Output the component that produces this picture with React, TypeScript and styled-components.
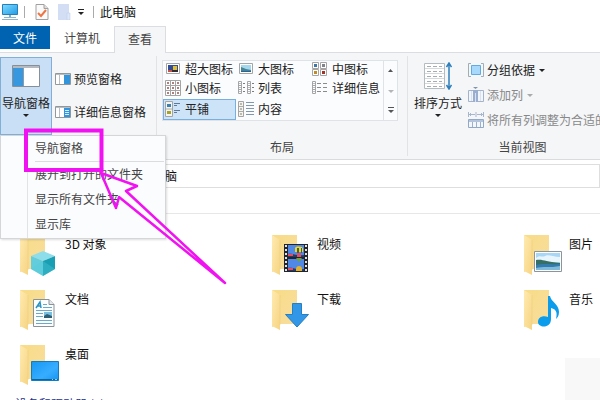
import React from "react";
import styled, { createGlobalStyle, css } from "styled-components";

const GlobalStyle = createGlobalStyle`
  * { box-sizing: border-box; }
  body {
    margin: 0;
    background: #fff;
    color: #222;
    font: 12px/16px "Noto Sans CJK SC", sans-serif;
  }
  button, input {
    margin: 0;
    padding: 0;
    border: 0;
    background: none;
    color: inherit;
    font: inherit;
    white-space: nowrap;
  }
  svg { display: block; flex: none; }
`;

const Explorer = styled.div`
  position: relative;
  height: 100vh;
  overflow: hidden;
  background: #fff;
`;

const TitleBar = styled.header`
  display: flex;
  align-items: center;
  height: 26px;
  padding: 0 2px 2px;
  color: #111;
`;

const QuickButton = styled.button`
  display: flex;
  align-items: center;
  justify-content: center;
  width: 22px;
  height: 20px;
`;

const CaretButton = styled(QuickButton)`
  width: 12px;
`;

const Divider = styled.span`
  width: 1px;
  height: 12px;
  margin: 0 6px;
  background: #aaa;
`;

const WindowTitle = styled.h1`
  margin: 0;
  font: inherit;
`;

const Tabs = styled.nav`
  display: flex;
  height: 27px;
  border-bottom: 1px solid #dcdde0;
`;

const Tab = styled.button<{ $kind?: "file" | "active" }>`
  width: 64px;
  height: 26px;
  padding-bottom: 2px;
  color: #444;
  ${(p) => p.$kind === "file" && css`
    width: 50px;
    height: 23px;
    padding-bottom: 0;
    background: #0063b1;
    color: #fff;
  `}
  ${(p) => p.$kind === "active" && css`
    width: 52px;
    height: 27px;
    padding-bottom: 2px;
    border: 1px solid #dcdde0;
    border-bottom: 0;
    background: #f4f6f8;
  `}
`;

const Ribbon = styled.section`
  display: flex;
  height: 107px;
  overflow: hidden;
  border-bottom: 1px solid #dadbdc;
  background: #f4f6f8;
`;

const Group = styled.div<{ $width?: number }>`
  display: flex;
  flex-direction: column;
  flex: ${(p) => (p.$width ? `0 0 ${p.$width}px` : "1 0 230px")};
  margin: 3px 0;
  border-right: 1px solid #e1e3e5;
`;

const GroupBody = styled.div<{ $inset?: boolean }>`
  display: flex;
  height: 83px;
  padding: ${(p) => (p.$inset ? "4px 9px 0 5px" : "1px 0 0")};
`;

const GroupLabel = styled.div`
  height: 18px;
  text-align: center;
  line-height: 17px;
  color: #444;
`;

const BigButton = styled.button<{ $open?: boolean }>`
  display: flex;
  flex-direction: column;
  align-items: center;
  flex: none;
  width: ${(p) => (p.$open ? 52 : 60)}px;
  height: 78px;
  padding-top: ${(p) => (p.$open ? 7 : 4)}px;
  border: 1px solid ${(p) => (p.$open ? "#82afd8" : "transparent")};
  background: ${(p) => (p.$open ? "#c9dff5" : "transparent")};
`;

const BigText = styled.span<{ $open?: boolean }>`
  margin-top: ${(p) => (p.$open ? 8 : 5)}px;
`;

const PaneColumn = styled.div`
  display: flex;
  flex-direction: column;
  gap: 16px;
  padding: 13px 0 0 3px;
`;

const IconButton = styled.button`
  display: flex;
  align-items: center;
  gap: 3px;
  height: 17px;
  &:disabled { color: #888; }
`;

const ViewColumn = styled.div`
  display: flex;
  flex-direction: column;
  gap: 8px;
  padding-top: 4px;
`;

const Gallery = styled.div`
  display: grid;
  grid-template-columns: 73px 74px 1fr 14px;
  grid-template-rows: 17px 21px 21px;
  width: 100%;
  height: 61px;
  border: 1px solid #dfe3e7;
  background: #fbfcfe;
`;

const GalleryItem = styled.button<{ $selected?: boolean }>`
  display: flex;
  align-items: center;
  gap: 4px;
  padding: 0 0 1px 1px;
  border: 1px solid ${(p) => (p.$selected ? "#78aee0" : "transparent")};
  background: ${(p) => (p.$selected ? "#cde3f8" : "transparent")};
`;

const Scroller = styled.div`
  display: flex;
  flex-direction: column;
  grid-column: 4;
  grid-row: 1 / 4;
  border-left: 1px solid #dfe3e7;
  button {
    display: flex;
    flex: 1;
    align-items: center;
    justify-content: center;
  }
`;

const AddressRow = styled.div`
  height: 28px;
  padding-top: 4px;
`;

const AddressField = styled.input`
  display: block;
  width: calc(100% - 130px);
  height: 24px;
  margin-left: 130px;
  padding: 0 0 2px 10px;
  border: 1px solid #dedede;
  color: #111;
`;

const HeaderStrip = styled.div`
  height: 26px;
  border-bottom: 1px solid #e7e7e7;
`;

const FolderGrid = styled.main`
  display: grid;
  grid-template-columns: repeat(auto-fill, 252px);
  grid-auto-rows: 55px;
  min-width: 776px;
  padding: 20px 0 0 20px;
`;

const FolderLink = styled.a`
  display: flex;
  gap: 4px;
  width: 120px;
  color: #111;
  text-decoration: none;
  span { padding-top: 2px; }
`;

const SectionTitle = styled.h2`
  margin: -3px 0 0 15px;
  color: #1e3287;
  font: inherit;
`;

const Menu = styled.div`
  position: absolute;
  top: 135px;
  left: 0;
  width: 166px;
  padding-left: 26px;
  border: 1px solid #d5d6d8;
  background: #fbfcfe;
  box-shadow: 1px 1px 2px #0002;
`;

const MenuList = styled.div`
  display: flex;
  flex-direction: column;
  padding-bottom: 1px;
  border-left: 1px solid #e2e3e5;
`;

const MenuItem = styled.button`
  height: 25px;
  padding: 0 0 1px 7px;
  color: #444;
  text-align: left;
`;

const MenuRule = styled.hr`
  width: calc(100% - 8px);
  margin: 0 1px 0 7px;
  border: 0;
  border-top: 1px solid #dcdcde;
`;

const Marker = styled.svg`
  position: absolute;
  top: 125px;
  left: 20px;
  pointer-events: none;
`;

const CornerPatch = styled.div`
  position: absolute;
  right: 0;
  bottom: 0;
  width: 35px;
  height: 42px;
  background: #f8f8f8;
`;

const Caret = ({ up, bar, color = "#222" }: { up?: boolean; bar?: boolean; color?: string }) => (
  <svg width="8" height="7" viewBox="0 0 8 7" fill={color}>
    {bar && <path d="M1 0h6v1H1z" />}
    <path d={up ? "M1 5h5L3.500 2z" : "M1 3h6L4 6z"} />
  </svg>
);

const ComputerIcon = () => (
  <svg width="16" height="16" viewBox="0 0 16 16">
    <defs>
      <linearGradient id="screen" x2="1" y2="1">
        <stop stopColor="#80dcff" />
        <stop offset="1" stopColor="#209be5" />
      </linearGradient>
    </defs>
    <path d="M.5.500h15v10H.5z" fill="url(#screen)" stroke="#267fb8" />
    <path d="M7 11h2v2H7z" fill="#8baabd" />
    <path d="M2 13.500h12M0 15.500h16" stroke="#8fb6ca" />
  </svg>
);

const CheckDocIcon = () => (
  <svg width="14" height="16" viewBox="0 0 14 16">
    <path d="M1 .5h8l4 4v11H1z" fill="#fafafa" stroke="#a0a0a0" />
    <path d="M9 .5v4h4" fill="#ddd" stroke="#a0a0a0" />
    <path d="M3 9l3 3 5-6" fill="none" stroke="#ed7543" strokeWidth="2" />
  </svg>
);

const PaleFolderIcon = () => (
  <svg width="14" height="16" viewBox="0 0 14 16">
    <path d="M1 0h11v9h1v7H1z" fill="#d3def4" />
    <path d="M10 9h3v7h-3z" fill="#dfe8f8" stroke="#bacbea" strokeWidth=".5" />
  </svg>
);

const NavPaneIcon = () => (
  <svg width="28" height="22" viewBox="0 0 28 22">
    <path d="M.5.500h27v21H.5z" fill="#fff" stroke="#898f96" />
    <path d="M1 1h26v2H1z" fill="#b4bac0" />
    <path d="M1 3h10v18H1z" fill="#3898df" />
    <path d="M11.500 3v18" stroke="#8f9aa5" />
  </svg>
);

const PaneIcon = ({ lines }: { lines?: boolean }) => (
  <svg width="16" height="12" viewBox="0 0 16 12">
    <path d="M.5.500h15v11H.5z" fill="#fff" stroke="#92979c" />
    <path d="M1 1h14v1H1z" fill="#b9bec2" />
    <path d="M4.500 2v9" stroke="#b9bec2" />
    <path d="M9 2h6v9H9z" fill="#3494db" />
    {lines && <path d="M10 4.500h4M10 6.500h4M10 8.500h4" stroke="#d5ecff" />}
  </svg>
);

const SortIcon = () => (
  <svg width="28" height="28" viewBox="0 0 28 28">
    <path d="M.5 1.500h20v25H.5z" fill="#fff" stroke="#b4bbc1" />
    <path d="M1 6.500h19M1 11.500h19M1 16.500h19M1 21.500h19" stroke="#d5d9dc" />
    <path
      d="M3 4.500h15M3 9.500h15M3 14.500h15M3 19.500h15M3 24.500h15"
      stroke="#a4adb4"
      strokeDasharray="4 2"
    />
    <path d="M25 2v24M22.500 5L25 1l2.500 4M22.500 23l2.500 4 2.500-4" fill="none" stroke="#2d7fbd" strokeWidth="1.500" />
  </svg>
);

const GroupByIcon = () => (
  <svg width="16" height="14" viewBox="0 0 16 14">
    <path d="M3.500 2.500h9v9h-9z" fill="#a6d9fb" stroke="#63aadf" />
    <path d="M3 .5H.5v13H3M13 .5h2.500v13H13" fill="none" stroke="#a3adb5" />
  </svg>
);

const AddColumnIcon = () => (
  <svg width="16" height="15" viewBox="0 0 16 15">
    <path d="M.5 3.500h15v11H.5z" fill="#f2f6fb" stroke="#a3b3cb" />
    <path d="M5 3h5v12H5z" fill="#9caed0" />
    <path d="M7.500 6v9M12.500 4v10M3.500 4v10" stroke="#d7e1ef" />
    <path d="M5 0h5L7.500 2z" fill="#8093b0" />
  </svg>
);

const FitColumnsIcon = () => (
  <svg width="16" height="16" viewBox="0 0 16 16">
    <path d="M.5 7.500h15v8H.5z" fill="#f4f8fc" stroke="#91a8c7" />
    <path d="M1 8h14v2H1z" fill="#b4c4dc" />
    <path d="M4.500 10v5M8.500 10v5M12.500 10v5" stroke="#9db1cc" />
    <path d="M.5 0v5M8 0v5M15.500 0v5M1 2.500h6M9 2.500h6M3 1L1.500 2.500 3 4M13 1l1.500 1.500L13 4" fill="none" stroke="#a6b6cc" />
  </svg>
);

const ThumbIcon = ({ night }: { night?: boolean }) => (
  <svg width="16" height="14" viewBox="0 0 16 14">
    <path d="M1.500 1.500h13v10h-13z" fill="#fff" stroke="#a5a5a5" />
    <path d="M3 3h10v7H3z" fill={night ? "#314c9b" : "#a4d8ef"} />
    {night ? (
      <>
        <path d="M8 4h4v4H8z" fill="#e2bf2e" />
        <path d="M3 8h4v2H3z" fill="#cc5344" />
        <path d="M7 8h6v2H7z" fill="#302b37" />
      </>
    ) : (
      <>
        <path d="M3 5l5 2 5 1v2H3z" fill="#47848c" />
        <path d="M3 9h10v1H3z" fill="#2762a4" />
      </>
    )}
  </svg>
);

const MediumIcon = () => (
  <svg width="16" height="14" viewBox="0 0 16 14">
    {[[0, 0], [8, 0], [0, 7], [8, 7]].map(([x, y], i) => (
      <g key={i} transform={`translate(${x} ${y})`}>
        <path d="M.5.500h6v6h-6z" fill="#fff" stroke="#a5a5a5" />
        <path d="M2 2h3v3H2z" fill={["#3c75aa", "#80838a", "#c28b26", "#a53024"][i]} />
      </g>
    ))}
  </svg>
);

const SmallGridIcon = () => (
  <svg width="16" height="16" viewBox="0 0 16 16">
    <path d="M.5.500h15v15H.5zM.5 5.500h15M.5 10.500h15M5.500.500v15M10.500.500v15" fill="#fff" stroke="#a4a4a4" />
    <path d="M2 3h2m3 0h2m3 0h2M2 8h2m3 0h2m3 0h2M2 13h2m3 0h2m3 0h2" stroke="#945552" strokeWidth="1.500" />
  </svg>
);

const ListIcon = ({ detail }: { detail?: boolean }) => (
  <svg width="16" height="14" viewBox="0 0 16 14">
    {(detail ? [0] : [0, 9]).map((x) => (
      <g key={x} transform={`translate(${x})`}>
        <path d="M.5.500h3v12h-3zM.5 4.500h3M.5 8.500h3" fill="#fff" stroke="#a4a4a4" />
        <path d="M2 2v1m0 3v1m0 3v1" stroke="#697c91" />
        {!detail && <path d="M5 2.500h2M5 6.500h2M5 10.500h2" stroke="#7d7d7d" />}
      </g>
    ))}
    {detail && <path d="M5 2.500h4m2 0h4M5 6.500h4m2 0h4M5 10.500h4m2 0h4" stroke="#8b8b8b" />}
  </svg>
);

const TileIcon = ({ content }: { content?: boolean }) => (
  <svg width="16" height="16" viewBox="0 0 16 16">
    <path d={content ? "M.5.500h5v15h-5z" : "M.5.500h7v15h-7z"} fill="#f6f5ed" stroke="#a4a4a4" />
    {content ? (
      <>
        <path d="M1 5.500h4M1 10.500h4" stroke="#aaa" />
        <path d="M2 3h2M2 8h2M2 13h2" stroke="#7e7e6e" />
        <path d="M8 1.500h8M8 4.500h8M8 7.500h8M8 10.500h8M8 13.500h8" stroke="#8297ae" />
      </>
    ) : (
      <>
        <path d="M1 8h6" stroke="#aaa" />
        <path d="M2 3h4v3H2z" fill="#3980b4" />
        <path d="M2 10h4v3H2z" fill="#a4a332" />
        <path d="M9 2.500h6M9 4.500h3M9 9.500h6M9 11.500h3" stroke="#607b99" />
      </>
    )}
  </svg>
);

type FolderKind = "cube" | "video" | "picture" | "document" | "download" | "music" | "desktop";

const FolderIcon = ({ kind }: { kind: FolderKind }) => (
  <svg width="41" height="42" viewBox="0 0 41 42">
    <defs>
      <linearGradient id={`back-${kind}`} x2="1" y2="1">
        <stop stopColor="#f8dc86" />
        <stop offset="1" stopColor="#f8dda0" />
      </linearGradient>
      <linearGradient id={`front-${kind}`} x2="1" y2="1">
        <stop stopColor="#ffeab0" />
        <stop offset="1" stopColor="#f6d583" />
      </linearGradient>
      <linearGradient id={`blue-${kind}`} x2="1" y2="1">
        <stop stopColor="#1597f5" />
        <stop offset=".6" stopColor="#37adff" />
        <stop offset="1" stopColor="#1694f1" />
      </linearGradient>
    </defs>
    <path d="M0 1h25v34H8L0 38z" fill={`url(#back-${kind})`} />
    <path d="M0 1l8 5v35l-8-4z" fill={`url(#front-${kind})`} />
    <path d="M8 6v30" stroke="#eccb77" strokeWidth=".5" />
    {kind === "cube" && (
      <>
        <path d="M11 22l12-5 12 5-12 5z" fill="#8eddea" />
        <path d="M11 22l12 5v15l-12-7z" fill="#62cddc" />
        <path d="M23 27l12-5v13l-12 7z" fill="#189fb4" />
        <path d="M11 35l12-8 12 8-12 7z" fill="#55cbd9" fillOpacity=".35" />
      </>
    )}
    {kind === "document" && (
      <>
        <path d="M13.500 10.500H29l5 5v22H13.500z" fill="#fcfdfe" stroke="#8a9299" />
        <path d="M29 10.500v5h5" fill="#e5e9ed" stroke="#8a9299" />
        <path d="M16 19l4-6 1 6m-4-2h4" fill="none" stroke="#2a93c1" strokeWidth="1.500" />
        <path d="M23 15.500h4m-4 3h9M16 21.500h16M16 24.500h7M16 27.500h7M16 31.500h16M16 34.500h16" stroke="#6aaac8" />
        <path d="M24 23h8v6h-8z" fill="#79bfe0" />
        <path d="M24 27l3-2 5 2v2h-8z" fill="#305f74" />
      </>
    )}
    {kind === "desktop" && (
      <>
        <path d="M11.500 17.500h27v19h-27z" fill="url(#blue-desktop)" stroke="#147bbd" />
        <path d="M12 35.500h26" stroke="#09659d" />
        <path d="M32 35.500h1m2 0h2" stroke="#86d4ff" />
      </>
    )}
    {kind === "video" && (
      <>
        <path d="M12 10h24v28H12z" fill="#24252b" />
        <path d="M14 11v26M34 11v26" stroke="#dce4ed" strokeWidth="2" strokeDasharray="2 2" />
        <path d="M16 11h16v12H16zm0 14h16v12H16z" fill="#5089e5" />
        <path d="M16 20c5-1 7 2 16 1v2H16zm0 14c5-1 7 2 16 1v2H16z" fill="#203d65" />
        <path d="M23 14c1-2 8-2 8 1v3h-8z" fill="#eed434" />
        <path d="M25 14h2v5h-2zm4 0h1v5h-1z" fill="#3e6632" />
        <path d="M16 20h5v2h-5zm0 14h5v2h-5zM25 19h4v4h-4z" fill="#e64b61" />
        <path d="M24 24h6l-3 4z" fill="#6fa532" />
        <path d="M24 35c0-4 6-4 6 0v2h-6z" fill="#e3b12c" />
      </>
    )}
    {kind === "download" && (
      <path d="M20.500 14.500h9v11h7L25 38 13.500 25.500h7z" fill="#3297e6" stroke="#257fc3" />
    )}
    {kind === "picture" && (
      <>
        <path d="M10.500 17.500h27v20h-27z" fill="#fff" stroke="#8a969f" />
        <path d="M12 19h24v17H12z" fill="#a7d7f5" />
        <path d="M12 24c4-4 6 0 9-2s8 1 15 1v5H12z" fill="#e8f5fc" />
        <path d="M12 26c8-1 9 2 24 3v3H12z" fill="#356f65" />
        <path d="M12 31c8-2 14 0 24-1v6H12z" fill="#347baf" />
        <path d="M12 34c7-2 14 0 24-2v4H12z" fill="#81bad9" />
      </>
    )}
    {kind === "music" && (
      <path
        d="M24 7h2c1 6 9 8 9 16 0 4-2 6-3 7 2-8-1-10-5-11v11c0 10-13 9-13 3 0-5 5-7 10-5z"
        fill="#0b9cec"
      />
    )}
  </svg>
);

const folders: { name: string; kind: FolderKind }[] = [
  { name: "3D 对象", kind: "cube" },
  { name: "视频", kind: "video" },
  { name: "图片", kind: "picture" },
  { name: "文档", kind: "document" },
  { name: "下载", kind: "download" },
  { name: "音乐", kind: "music" },
  { name: "桌面", kind: "desktop" },
];

export default function App() {
  return (
    <Explorer>
      <GlobalStyle />
      <TitleBar>
        <ComputerIcon />
        <Divider />
        <QuickButton aria-label="属性"><CheckDocIcon /></QuickButton>
        <QuickButton aria-label="新建文件夹"><PaleFolderIcon /></QuickButton>
        <CaretButton aria-label="自定义快速访问工具栏"><Caret bar /></CaretButton>
        <Divider />
        <WindowTitle>此电脑</WindowTitle>
      </TitleBar>
      <Tabs>
        <Tab $kind="file">文件</Tab>
        <Tab>计算机</Tab>
        <Tab $kind="active">查看</Tab>
      </Tabs>
      <Ribbon>
        <Group $width={157}>
          <GroupBody>
            <BigButton $open aria-expanded="true">
              <NavPaneIcon />
              <BigText $open>导航窗格</BigText>
              <Caret />
            </BigButton>
            <PaneColumn>
              <IconButton><PaneIcon />预览窗格</IconButton>
              <IconButton><PaneIcon lines />详细信息窗格</IconButton>
            </PaneColumn>
          </GroupBody>
        </Group>
        <Group $width={251}>
          <GroupBody $inset>
            <Gallery>
              <GalleryItem><ThumbIcon night />超大图标</GalleryItem>
              <GalleryItem><ThumbIcon />大图标</GalleryItem>
              <GalleryItem><MediumIcon />中图标</GalleryItem>
              <Scroller>
                <button aria-label="向上"><Caret up color="#555" /></button>
                <button aria-label="向下"><Caret color="#b5b5b5" /></button>
                <button aria-label="更多"><Caret bar color="#555" /></button>
              </Scroller>
              <GalleryItem><SmallGridIcon />小图标</GalleryItem>
              <GalleryItem><ListIcon />列表</GalleryItem>
              <GalleryItem><ListIcon detail />详细信息</GalleryItem>
              <GalleryItem $selected><TileIcon />平铺</GalleryItem>
              <GalleryItem><TileIcon content />内容</GalleryItem>
            </Gallery>
          </GroupBody>
          <GroupLabel>布局</GroupLabel>
        </Group>
        <Group>
          <GroupBody>
            <BigButton>
              <SortIcon />
              <BigText>排序方式</BigText>
              <Caret />
            </BigButton>
            <ViewColumn>
              <IconButton><GroupByIcon />分组依据<Caret /></IconButton>
              <IconButton disabled><AddColumnIcon />添加列<Caret color="#aaa" /></IconButton>
              <IconButton disabled><FitColumnsIcon />将所有列调整为合适的大小</IconButton>
            </ViewColumn>
          </GroupBody>
          <GroupLabel>当前视图</GroupLabel>
        </Group>
      </Ribbon>
      <AddressRow>
        <AddressField aria-label="地址" defaultValue="此电脑" />
      </AddressRow>
      <HeaderStrip />
      <FolderGrid>
        {folders.map((folder) => (
          <FolderLink href="#" key={folder.kind}>
            <FolderIcon kind={folder.kind} />
            <span>{folder.name}</span>
          </FolderLink>
        ))}
      </FolderGrid>
      <SectionTitle>设备和驱动器 (7)</SectionTitle>
      <CornerPatch />
      <Menu>
        <MenuList>
          <MenuItem>导航窗格</MenuItem>
          <MenuRule />
          <MenuItem>展开到打开的文件夹</MenuItem>
          <MenuItem>显示所有文件夹</MenuItem>
          <MenuItem>显示库</MenuItem>
        </MenuList>
      </Menu>
      <Marker width="210" height="162" viewBox="20 125 210 162" fill="none" stroke="#f112f1">
        <path d="M26 130.500h75.500v39.500H26z" strokeWidth="4" />
        <path d="M101 173l36 13-11 5 99 92-106-86-3 11z" strokeWidth="2.500" strokeLinejoin="round" />
      </Marker>
    </Explorer>
  );
}
